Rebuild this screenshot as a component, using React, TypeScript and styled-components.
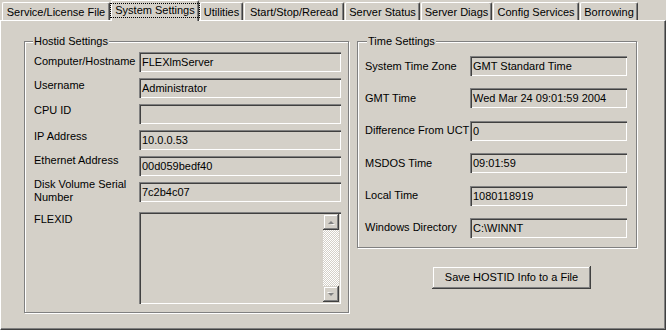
import React from 'react';
import styled, { createGlobalStyle } from 'styled-components';

const Global = createGlobalStyle`
  html, body { margin: 0; padding: 0; background: #d4d0c8; }
  body {
    font-family: "Liberation Sans", Arial, sans-serif;
    font-size: 11px;
    color: #000;
  }
  * { box-sizing: border-box; }
`;

const Window = styled.div`
  width: 666px;
  height: 330px;
  display: flex;
  flex-direction: column;
  background: #d4d0c8;
  overflow: hidden;
`;

const TabStrip = styled.div`
  display: flex;
  align-items: flex-end;
  gap: 1px;
  height: 20px;
  padding-left: 2px;
`;

const Tab = styled.div<{ $w: number; $active?: boolean }>`
  width: ${(p) => p.$w}px;
  height: ${(p) => (p.$active ? 21 : 18)}px;
  margin-bottom: ${(p) => (p.$active ? -1 : 0)}px;
  position: relative;
  z-index: ${(p) => (p.$active ? 1 : 0)};
  background: #d4d0c8;
  border-top: 1px solid #fff;
  border-left: 1px solid #fff;
  border-right: 1px solid #404040;
  border-radius: 2px 2px 0 0;
  box-shadow: inset -1px 0 #808080;
  display: flex;
  align-items: ${(p) => (p.$active ? 'flex-start' : 'center')};
  justify-content: center;
  padding-top: ${(p) => (p.$active ? 2 : 1)}px;
  white-space: nowrap;
  line-height: 13px;
`;

const Focus = styled.span`
  display: block;
  border: 1px dotted #000;
  padding: 0 4px;
  height: 15px;
  line-height: 13px;
`;

const Panel = styled.div`
  flex: 1;
  display: flex;
  gap: 8px;
  align-items: flex-start;
  padding: 20px 0 0 23px;
  border-top: 1px solid #fff;
  border-left: 1px solid #fff;
  border-right: 1px solid #404040;
  border-bottom: 1px solid #404040;
  box-shadow: inset -1px -1px #808080;
`;

const Group = styled.div<{ $w: number; $pb: number }>`
  width: ${(p) => p.$w}px;
  display: flex;
  flex-direction: column;
  border: 1px solid #808080;
  box-shadow: 1px 1px 0 #fff, inset 1px 1px 0 #fff;
  padding-bottom: ${(p) => p.$pb}px;
`;

const Caption = styled.div<{ $ml: number }>`
  align-self: flex-start;
  margin: -7px 0 0 ${(p) => p.$ml}px;
  padding: 0 1px;
  line-height: 13px;
  background: #d4d0c8;
  white-space: nowrap;
`;

const Form = styled.div<{ $pl: number; $mt: number; $gap: number }>`
  display: flex;
  flex-direction: column;
  gap: ${(p) => p.$gap}px;
  padding-left: ${(p) => p.$pl}px;
  margin-top: ${(p) => p.$mt}px;
`;

const Row = styled.div<{ $center?: boolean }>`
  display: flex;
  align-items: ${(p) => (p.$center ? 'center' : 'flex-start')};
`;

const Label = styled.div<{ $dy?: number }>`
  width: 105px;
  flex: none;
  line-height: 13px;
  margin-top: ${(p) => p.$dy ?? 0}px;
`;

const sunken = `
  background: #d4d0c8;
  box-shadow: inset 1px 1px #808080, inset 2px 2px #404040, inset -1px -1px #fff, inset -2px -2px #d4d0c8;
`;

const Field = styled.div<{ $w: number }>`
  ${sunken}
  width: ${(p) => p.$w}px;
  height: 20px;
  line-height: 20px;
  padding: 0 3px;
  white-space: nowrap;
  overflow: hidden;
`;

const TextArea = styled.div`
  ${sunken}
  width: 202px;
  height: 92px;
  padding: 2px;
  display: flex;
  justify-content: flex-end;
`;

const ScrollBar = styled.div`
  width: 16px;
  display: flex;
  flex-direction: column;
  justify-content: space-between;
  background: repeating-conic-gradient(#fff 0 25%, #d4d0c8 0 50%) 0 0 / 2px 2px;
`;

const raised = `
  background: #d4d0c8;
  box-shadow: inset -1px -1px #404040, inset 1px 1px #d4d0c8, inset -2px -2px #808080, inset 2px 2px #fff;
`;

const ScrollBtn = styled.div`
  ${raised}
  width: 16px;
  height: 16px;
  display: flex;
  align-items: center;
  justify-content: center;
`;

const RightCol = styled.div`
  display: flex;
  flex-direction: column;
  align-items: flex-start;
`;

const Button = styled.div`
  ${raised}
  width: 159px;
  height: 23px;
  margin: 18px 0 0 75px;
  display: flex;
  align-items: center;
  justify-content: center;
  white-space: nowrap;
`;

const Arrow = ({ down }: { down?: boolean }) => (
  <svg width="8" height="5" viewBox="0 0 8 5" style={{ transform: down ? 'rotate(180deg)' : undefined }}>
    <polygon points="1,4 4,1 7,4" fill="#808080" />
    <polygon points="2,5 8,5 7,4" fill="#fff" />
  </svg>
);

const tabs: { label: string; w: number; active?: boolean }[] = [
  { label: 'Service/License File', w: 108 },
  { label: 'System Settings', w: 88, active: true },
  { label: 'Utilities', w: 43 },
  { label: 'Start/Stop/Reread', w: 100 },
  { label: 'Server Status', w: 75 },
  { label: 'Server Diags', w: 71 },
  { label: 'Config Services', w: 86 },
  { label: 'Borrowing', w: 58 },
];

const hostRows: { label: React.ReactNode; value: string; dy: number }[] = [
  { label: 'Computer/Hostname', value: 'FLEXlmServer', dy: 3 },
  { label: 'Username', value: 'Administrator', dy: 1 },
  { label: 'CPU ID', value: '', dy: 0 },
  { label: 'IP Address', value: '10.0.0.53', dy: 0 },
  { label: 'Ethernet Address', value: '00d059bedf40', dy: -2 },
  { label: <>Disk Volume Serial<br />Number</>, value: '7c2b4c07', dy: -4 },
];

const timeRows: [string, string][] = [
  ['System Time Zone', 'GMT Standard Time'],
  ['GMT Time', 'Wed Mar 24 09:01:59 2004'],
  ['Difference From UCT', '0'],
  ['MSDOS Time', '09:01:59'],
  ['Local Time', '1080118919'],
  ['Windows Directory', 'C:\\WINNT'],
];

export default function App() {
  return (
    <Window>
      <Global />
      <TabStrip>
        {tabs.map((t) => (
          <Tab key={t.label} $w={t.w} $active={t.active}>
            {t.active ? <Focus>{t.label}</Focus> : t.label}
          </Tab>
        ))}
      </TabStrip>
      <Panel>
        <Group $w={325} $pb={8}>
          <Caption $ml={8}>Hostid Settings</Caption>
          <Form $pl={9} $mt={4} $gap={6}>
            {hostRows.map((r, i) => (
              <Row key={i}>
                <Label $dy={r.dy}>{r.label}</Label>
                <Field $w={202}>{r.value}</Field>
              </Row>
            ))}
            <Row style={{ marginTop: 2 }}>
              <Label $dy={1}>FLEXID</Label>
              <TextArea>
                <ScrollBar>
                  <ScrollBtn><Arrow /></ScrollBtn>
                  <ScrollBtn><Arrow down /></ScrollBtn>
                </ScrollBar>
              </TextArea>
            </Row>
          </Form>
        </Group>
        <RightCol>
          <Group $w={280} $pb={9}>
            <Caption $ml={9}>Time Settings</Caption>
            <Form $pl={7} $mt={8} $gap={12.4}>
              {timeRows.map(([l, v]) => (
                <Row key={l} $center>
                  <Label>{l}</Label>
                  <Field $w={157}>{v}</Field>
                </Row>
              ))}
            </Form>
          </Group>
          <Button>Save HOSTID Info to a File</Button>
        </RightCol>
      </Panel>
    </Window>
  );
}
